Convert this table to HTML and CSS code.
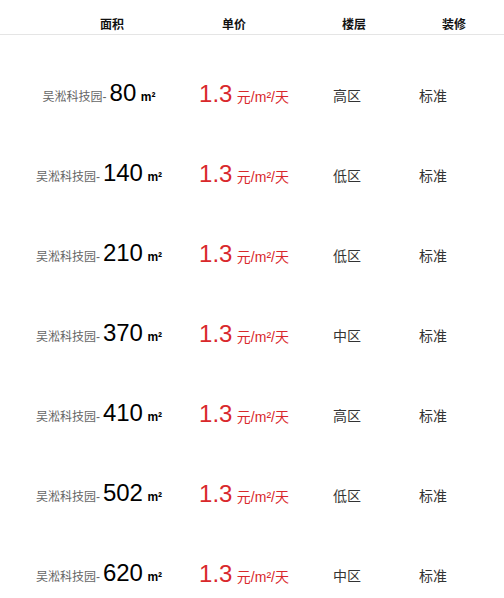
FILE: index.html
```html
<!DOCTYPE html>
<html lang="zh-CN">
<head>
<meta charset="utf-8">
<title>房源列表</title>
<link rel="stylesheet" href="styles.css">
</head>
<body>
<div class="head">
  <div class="h">面积</div>
  <div class="h">单价</div>
  <div class="h">楼层</div>
  <div class="h">装修</div>
</div>
<div class="list">
  <div class="row"><div class="area"><span class="name">吴淞科技园-</span><span class="num">80</span> <span class="unit">m²</span></div><div class="price"><span class="pnum">1.3</span> <span class="punit">元/m²/天</span></div><div class="floor">高区</div><div class="deco">标准</div></div>
  <div class="row"><div class="area"><span class="name">吴淞科技园-</span><span class="num">140</span> <span class="unit">m²</span></div><div class="price"><span class="pnum">1.3</span> <span class="punit">元/m²/天</span></div><div class="floor">低区</div><div class="deco">标准</div></div>
  <div class="row"><div class="area"><span class="name">吴淞科技园-</span><span class="num">210</span> <span class="unit">m²</span></div><div class="price"><span class="pnum">1.3</span> <span class="punit">元/m²/天</span></div><div class="floor">低区</div><div class="deco">标准</div></div>
  <div class="row"><div class="area"><span class="name">吴淞科技园-</span><span class="num">370</span> <span class="unit">m²</span></div><div class="price"><span class="pnum">1.3</span> <span class="punit">元/m²/天</span></div><div class="floor">中区</div><div class="deco">标准</div></div>
  <div class="row"><div class="area"><span class="name">吴淞科技园-</span><span class="num">410</span> <span class="unit">m²</span></div><div class="price"><span class="pnum">1.3</span> <span class="punit">元/m²/天</span></div><div class="floor">高区</div><div class="deco">标准</div></div>
  <div class="row"><div class="area"><span class="name">吴淞科技园-</span><span class="num">502</span> <span class="unit">m²</span></div><div class="price"><span class="pnum">1.3</span> <span class="punit">元/m²/天</span></div><div class="floor">低区</div><div class="deco">标准</div></div>
  <div class="row"><div class="area"><span class="name">吴淞科技园-</span><span class="num">620</span> <span class="unit">m²</span></div><div class="price"><span class="pnum">1.3</span> <span class="punit">元/m²/天</span></div><div class="floor">中区</div><div class="deco">标准</div></div>
</div>
</body>
</html>
```
FILE: styles.css
```css
html, body {
  margin: 0;
  padding: 0;
  background: #fff;
}
body {
  font-family: "Liberation Sans", "Noto Sans CJK SC", sans-serif;
  color: #333;
}
.head {
  display: grid;
  grid-template-columns: 120px 124px 116px 84px;
  padding-left: 52px;
  padding-top: 16px;
  height: 18px;
  border-bottom: 1px solid #e5e5e5;
}
.h {
  text-align: center;
  font-size: 12px;
  font-weight: bold;
  line-height: 18px;
  color: #111;
}
.list {
  padding-top: 20px;
}
.row {
  display: grid;
  grid-template-columns: 198px 92px 114px 58px;
  height: 80px;
  align-items: center;
  white-space: nowrap;
}
.row > div {
  text-align: center;
}
.area {
  line-height: 28px;
}
.name {
  font-size: 12px;
  color: #666;
}
.num {
  font-size: 24px;
  color: #000;
  margin-left: 3px;
}
.unit {
  font-size: 12px;
  font-weight: bold;
  color: #000;
}
.price {
  color: #d9282c;
  line-height: 28px;
}
.pnum {
  font-size: 24px;
}
.punit {
  font-size: 14px;
}
.floor, .deco {
  font-size: 14px;
  color: #333;
}
```
